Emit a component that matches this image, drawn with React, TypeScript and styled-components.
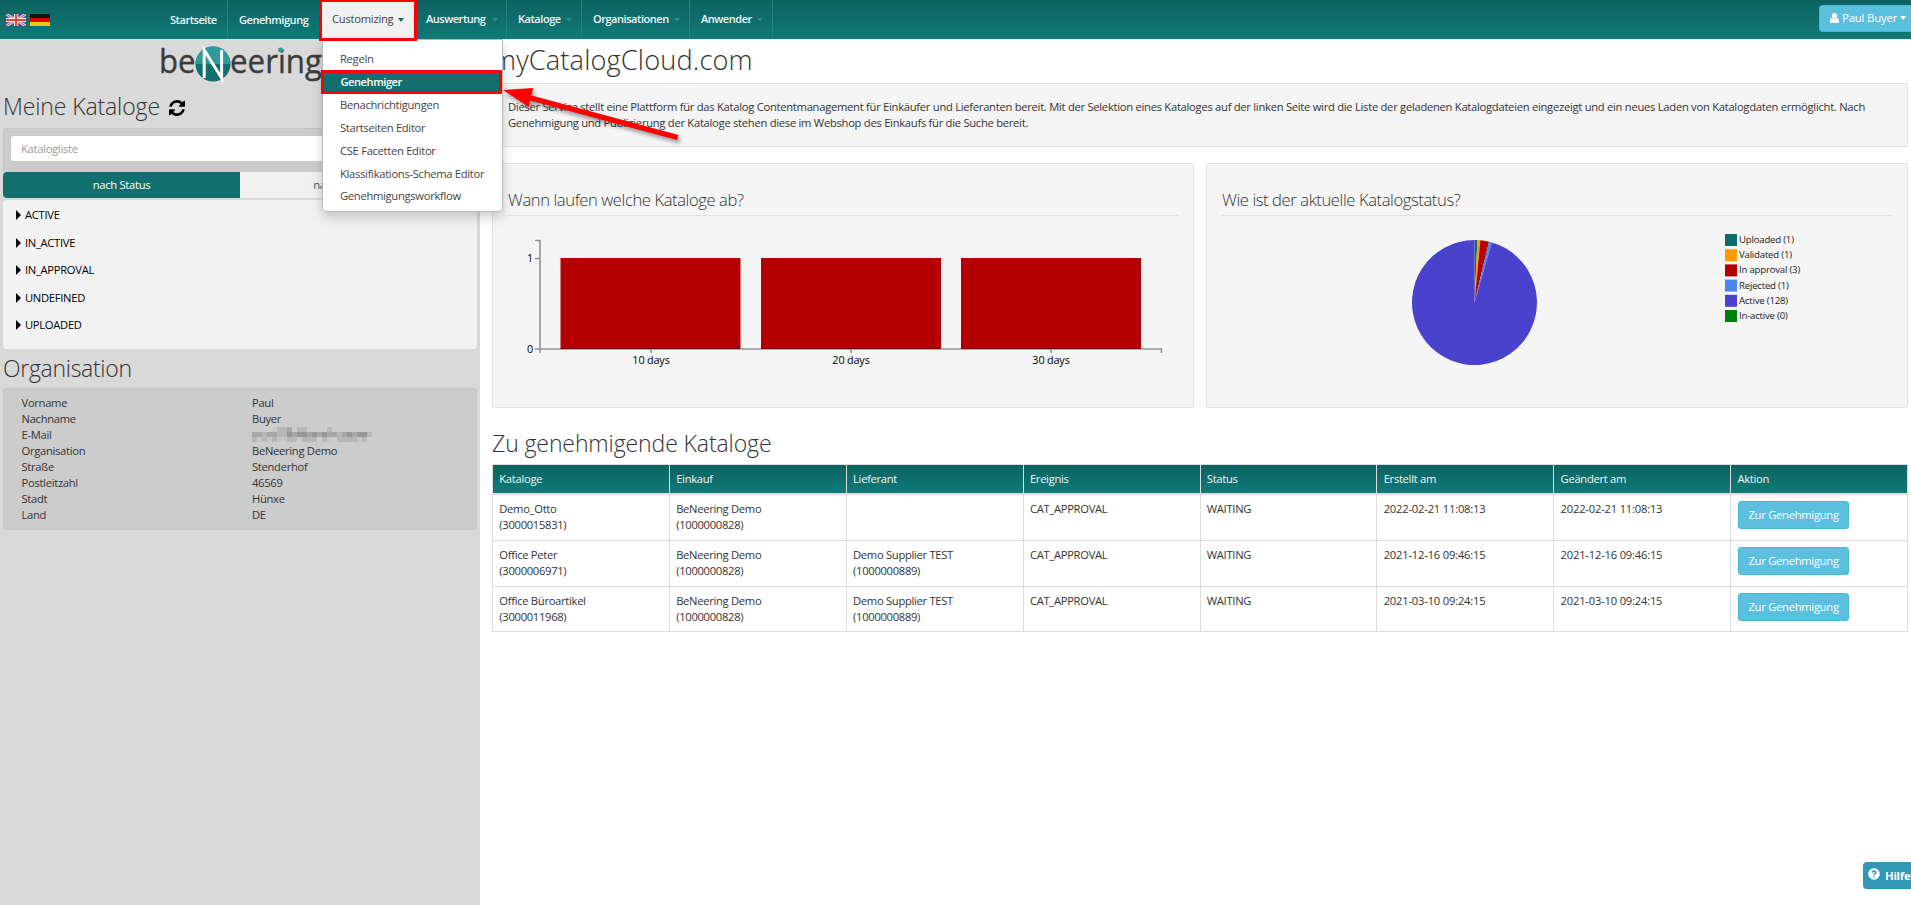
import React from "react";
import styled, { createGlobalStyle, css } from "styled-components";

const Global = createGlobalStyle`
  * { box-sizing: border-box; }
  body { margin: 0; background: #fff; overflow: hidden; }
  #root { height: 905px; }
`;

const Page = styled.div`
  position: relative;
  display: flex;
  flex-direction: column;
  height: 905px;
  width: 1911px;
  overflow: hidden;
  font: 11.2px/16px "Open Sans", "Noto Sans", sans-serif;
  letter-spacing: -0.29px;
  color: #333;
  white-space: nowrap;
`;

const Navbar = styled.header`
  display: flex;
  flex: none;
  align-items: stretch;
  height: 39px;
  background: linear-gradient(#0d6262, #107a78);
`;
const Flags = styled.div`
  display: flex;
  gap: 4px;
  align-items: center;
  width: 159px;
  padding-left: 6px;
`;
const NavItem = styled.div<{ $w: number; $top?: number; $active?: boolean }>`
  position: relative;
  width: ${(p) => p.$w}px;
  padding: ${(p) => p.$top ?? 11}px 0 0 11px;
  font-weight: 600;
  font-size: 11px;
  letter-spacing: -0.46px;
  color: #eef6f6;
  border-right: 1px solid #2b8080;
  ${(p) =>
    p.$active &&
    css`
      background: #f1f1f1;
      color: #444;
      font-weight: 400;
      font-size: 11.2px;
      letter-spacing: -0.25px;
      border-right: 0;
    `}
`;
const Caret = styled.i<{ $color?: string; $ml?: number }>`
  display: inline-block;
  margin-left: ${(p) => p.$ml ?? 6}px;
  vertical-align: 1px;
  border: 3.5px solid transparent;
  border-top-color: ${(p) => p.$color ?? "#2f8b89"};
  border-top-width: 4px;
  border-bottom: 0;
`;
const ActiveFrame = styled.span`
  position: absolute;
  z-index: 6;
  left: -2px;
  top: -1px;
  width: 98px;
  height: 42px;
  border: 3px solid #f00;
`;
const Menu = styled.div`
  position: absolute;
  z-index: 5;
  left: 1px;
  top: 39px;
  width: 181px;
  height: 173px;
  padding-top: 8px;
  letter-spacing: -0.29px;
  background: #fff;
  border: 1px solid #b9b9b9;
  border-radius: 0 0 4px 4px;
  box-shadow: 0 6px 12px rgba(0, 0, 0, 0.18);
`;
const MenuItem = styled.div<{ $on?: boolean }>`
  height: 22.9px;
  padding: 3px 0 0 17px;
  color: #444;
  ${(p) =>
    p.$on &&
    css`
      height: 24px;
      margin: -1px 0 0 -2px;
      padding: 1px 0 0 16.5px;
      color: #fff;
      font-size: 11px;
      letter-spacing: -0.4px;
      font-weight: 600;
      background: #11706f;
      border: 3px solid #f00;
    `}
`;
const UserButton = styled.div`
  display: flex;
  align-items: center;
  gap: 3px;
  width: 92px;
  height: 27px;
  margin: 5px 0 0 auto;
  padding: 0 0 1px 10px;
  font-size: 11.4px;
  letter-spacing: -0.2px;
  color: #fff;
  background: #5bc0de;
  border: 1px solid #46b8da;
  border-right: 0;
  border-radius: 4px 0 0 4px;
`;

const Body = styled.div`
  display: flex;
  flex: 1;
`;
const Sidebar = styled.aside`
  flex: none;
  width: 480px;
  padding: 0 3px;
  background: #d9d9d9;
`;
const LogoRow = styled.div`
  height: 48px;
  padding: 3px 0 0 155px;
`;
const Title = styled.h2<{ $h: number; $top: number; $size?: number; $ls?: number }>`
  height: ${(p) => p.$h}px;
  margin: 0;
  padding-top: ${(p) => p.$top}px;
  font-size: ${(p) => p.$size ?? 23}px;
  line-height: 30px;
  font-weight: 300;
  letter-spacing: ${(p) => p.$ls ?? -0.12}px;
  color: #333;
  svg { margin-left: 9px; vertical-align: -1px; }
`;
const SearchBox = styled.div`
  height: 44px;
  padding: 7px;
  background: #cbcbcb;
  border: 1px solid #c3c3c3;
  border-bottom: 0;
  border-radius: 3px 3px 0 0;
`;
const SearchField = styled.div`
  height: 25px;
  padding: 5px 10px;
  color: #999;
  background: #fff;
  border-radius: 3px;
`;
const Tabs = styled.div`
  display: flex;
  height: 26px;
  background: #f1f1f1;
  border-radius: 4px 4px 0 4px;
`;
const Tab = styled.div<{ $on?: boolean }>`
  flex: 1;
  padding-top: 5px;
  text-align: center;
  color: ${(p) => (p.$on ? "#fff" : "#11706f")};
  background: ${(p) => (p.$on ? "#11706f" : "transparent")};
  border-radius: 4px 0 0 4px;
`;
const StatusList = styled.div`
  height: 149px;
  margin-top: 2px;
  padding: 7px 0 0 13px;
  background: #f2f2f2;
  border-radius: 4px;
  color: #000;
`;
const StatusRow = styled.div`
  display: flex;
  align-items: center;
  gap: 4px;
  height: 16px;
  margin-bottom: 11.6px;
`;
const Triangle = styled.i`
  border: 5px solid transparent;
  border-left: 5px solid #000;
  border-right: 0;
`;
const OrgPanel = styled.dl`
  display: grid;
  grid-template-columns: 230.5px 1fr;
  height: 142px;
  margin: 0;
  padding: 6px 17.5px;
  align-content: start;
  background: #ccc;
  border: 1px solid #c5c5c5;
  border-radius: 3px;
  dt, dd { margin: 0; height: 16px; }
`;

const Main = styled.main`
  flex: 1;
  min-width: 0;
  padding: 0 3px 0 12px;
`;
const Panel = styled.section`
  background: #f5f5f5;
  border: 1px solid #e1e1e1;
  border-radius: 3px;
`;
const Intro = styled(Panel)`
  height: 64px;
  padding: 15px;
  letter-spacing: -0.267px;
`;
const Charts = styled.div`
  display: grid;
  grid-template-columns: 1fr 1fr;
  gap: 12px;
  height: 245px;
  margin: 16px 0 17px;
`;
const ChartPanel = styled(Panel)`
  padding: 21px 15px 0;
`;
const ChartTitle = styled.h3`
  height: 31px;
  margin: 0;
  font-size: 16.6px;
  line-height: 29px;
  font-weight: 300;
  letter-spacing: -0.4px;
  border-bottom: 1px solid #e2e2e2;
`;
const Drawing = styled.svg`
  display: block;
  overflow: visible;
  text { font-family: "Open Sans", "Noto Sans", sans-serif; }
`;
const Table = styled.div`
  border: 1px solid #ddd;
  border-width: 1px 0 0 1px;
`;
const Row = styled.div<{ $h: number; $head?: boolean }>`
  display: grid;
  grid-template-columns: repeat(8, 1fr);
  height: ${(p) => p.$h}px;
  border-bottom: ${(p) => (p.$head ? 2 : 1)}px solid #ddd;
  ${(p) => p.$head && css`color: #f2f8f8; background: linear-gradient(#0d6262, #107a78) padding-box;`}
`;
const Cell = styled.div<{ $date?: boolean }>`
  padding: 6px 0 0 6.3px;
  border-right: 1px solid #ddd;
  white-space: pre-line;
  letter-spacing: ${(p) => (p.$date ? "-0.2px" : "-0.29px")};
`;
const ActionButton = styled.div`
  width: 111px;
  height: 28px;
  margin-left: 0.7px;
  padding-top: 5px;
  text-align: center;
  letter-spacing: -0.26px;
  color: #fff;
  background: #5bc0de;
  border: 1px solid #46b8da;
  border-radius: 3px;
`;
const HelpTab = styled.div`
  position: absolute;
  right: 0;
  bottom: 16px;
  display: flex;
  align-items: center;
  gap: 5px;
  width: 48px;
  height: 27px;
  padding-left: 5px;
  color: #fff;
  font-weight: 700;
  font-size: 11.4px;
  background: #3197b7;
  border-radius: 4px 0 0 4px;
  svg { flex: none; margin-top: -3px; }
`;
const Arrow = styled.svg`
  position: absolute;
  z-index: 10;
  left: 495px;
  top: 78px;
  filter: drop-shadow(2px 3px 2px rgba(0, 0, 0, 0.4));
`;

const UkFlag = () => (
  <svg width="20" height="12" viewBox="0 0 20 12">
    <rect width="20" height="12" fill="#4a5ba6" />
    <path d="M0 0L20 12M20 0L0 12" stroke="#ead9e2" strokeWidth="2.6" />
    <path d="M0 0L20 12M20 0L0 12" stroke="#d8475a" strokeWidth="0.9" />
    <path d="M10 0V12M0 6H20" stroke="#fff" strokeWidth="4" />
    <path d="M10 0V12M0 6H20" stroke="#e8402c" strokeWidth="2" />
  </svg>
);
const DeFlag = () => (
  <svg width="20" height="12" viewBox="0 0 20 12">
    <rect width="20" height="4" fill="#111" />
    <rect y="4" width="20" height="4" fill="#e00000" />
    <rect y="8" width="20" height="4" fill="#fcc21a" />
  </svg>
);
const Logo = () => (
  <Drawing width="168" height="46" viewBox="0 0 168 46">
    <g fontSize="33" fill="#3c3c3b" stroke="#3c3c3b" strokeWidth="0.4" letterSpacing="0">
      <text x="1" y="31" textLength="36.500" lengthAdjust="spacingAndGlyphs">be</text>
      <text x="72" y="31" textLength="92" lengthAdjust="spacingAndGlyphs">eering</text>
    </g>
    <circle cx="55" cy="22" r="17.500" fill="#11706f" />
    <path d="M37.500 22a17.500 17.500 0 0 1 35 0z" fill="#2f9b99" />
    <path d="M46.200 36V8L63.600 36V8" fill="none" stroke="#fff" strokeWidth="3" />
    <circle cx="122.500" cy="8" r="2.400" fill="#2f9b99" />
  </Drawing>
);
const Refresh = () => (
  <svg width="16" height="16" viewBox="0 0 1536 1536">
    <path d="M1511 928q0 5-1 7-64 268-268 434.500t-478 166.500q-146 0-282.500-55t-243.500-157l-129 129q-19 19-45 19t-45-19-19-45v-448q0-26 19-45t45-19h448q26 0 45 19t19 45-19 45l-137 137q71 66 161 102t187 36q134 0 250-65t186-179q11-17 53-117 8-23 30-23h192q13 0 22.500 9.500t9.500 22.500zm25-800v448q0 26-19 45t-45 19h-448q-26 0-45-19t-19-45 19-45l138-138q-148-137-349-137-134 0-250 65t-186 179q-11 17-53 117-8 23-30 23h-199q-13 0-22.500-9.500t-9.500-22.500v-7q65-268 270-434.500t480-166.500q146 0 284 55.500t245 156.500l130-129q19-19 45-19t45 19 19 45z" />
  </svg>
);

const menu = ["Regeln", "Genehmiger", "Benachrichtigungen", "Startseiten Editor", "CSE Facetten Editor", "Klassifikations-Schema Editor", "Genehmigungsworkflow"];
const statuses = ["ACTIVE", "IN_ACTIVE", "IN_APPROVAL", "UNDEFINED", "UPLOADED"];
const org: [string, string | null][] = [
  ["Vorname", "Paul"], ["Nachname", "Buyer"], ["E-Mail", null], ["Organisation", "BeNeering Demo"],
  ["Straße", "Stenderhof"], ["Postleitzahl", "46569"], ["Stadt", "Hünxe"], ["Land", "DE"],
];
const slices = [
  { label: "Uploaded", n: 1, color: "#0d6c6c" },
  { label: "Validated", n: 1, color: "#ff9900" },
  { label: "In approval", n: 3, color: "#b40000" },
  { label: "Rejected", n: 1, color: "#4986ee" },
  { label: "Active", n: 128, color: "#4a42cc" },
  { label: "In-active", n: 0, color: "#008000" },
];
const heads = ["Kataloge", "Einkauf", "Lieferant", "Ereignis", "Status", "Erstellt am", "Geändert am", "Aktion"];
const rows = [
  ["Demo_Otto\n(3000015831)", "BeNeering Demo\n(1000000828)", "", "CAT_APPROVAL", "WAITING", "2022-02-21 11:08:13", "2022-02-21 11:08:13"],
  ["Office Peter\n(3000006971)", "BeNeering Demo\n(1000000828)", "Demo Supplier TEST\n(1000000889)", "CAT_APPROVAL", "WAITING", "2021-12-16 09:46:15", "2021-12-16 09:46:15"],
  ["Office Büroartikel\n(3000011968)", "BeNeering Demo\n(1000000828)", "Demo Supplier TEST\n(1000000889)", "CAT_APPROVAL", "WAITING", "2021-03-10 09:24:15", "2021-03-10 09:24:15"],
];

// Grey level of each 5px block that masks the mail address, one hex digit per block ("." is empty).
const mosaic = ["....cbba.bb....b........", "aabaabb9a99a9a9aaba9a99b", "bcbcbccbb.bbb.bc.bbbbcb."];
const MaskedMail = () => (
  <svg width="120" height="15" viewBox="0 0 24 3" shapeRendering="crispEdges">
    {mosaic.map((line, y) =>
      [...line].map((c, x) => c !== "." && <rect key={`${x}-${y}`} x={x} y={y} width="1" height="1" fill={`#${c}8${c}7${c}8`} />),
    )}
  </svg>
);

const BarChart = () => (
  <Drawing width="670" height="180" viewBox="508 216 670 180">
    {[560.5, 761, 961].map((x) => <rect key={x} x={x} y="258" width="180" height="91" fill="#b40000" />)}
    <path d="M535 240.500H540V349H535M535 258.500H540M540 353V349H1161.500V353M651 349V353M851 349V353M1051 349V353" fill="none" stroke="#000" strokeOpacity="0.4" strokeWidth="1.600" />
    <g fontSize="10.800" fill="#000">
      <text x="533" y="262" textAnchor="end">1</text>
      <text x="533" y="353" textAnchor="end">0</text>
      {[10, 20, 30].map((d, i) => <text key={d} x={651 + i * 200} y="364" textAnchor="middle" letterSpacing="-0.15">{d} days</text>)}
    </g>
  </Drawing>
);

const total = slices.reduce((s, d) => s + d.n, 0);
const PieChart = () => {
  let acc = 0;
  const at = (n: number) => {
    const a = (n / total) * Math.PI * 2;
    return `${1474.5 + 62.5 * Math.sin(a)} ${302.5 - 62.5 * Math.cos(a)}`;
  };
  return (
    <Drawing width="670" height="180" viewBox="1222 216 670 180">
      {slices.filter((s) => s.n).map((s) => {
        const from = at(acc);
        acc += s.n;
        return <path key={s.label} d={`M1474.500 302.500L${from}A62.500 62.500 0 ${s.n > total / 2 ? 1 : 0} 1 ${at(acc)}Z`} fill={s.color} />;
      })}
      {slices.map((s, i) => (
        <g key={s.label}>
          <rect x="1725" y={234 + i * 15.2} width="12" height="12" fill={s.color} />
          <text x="1739" y={243 + i * 15.2} fontSize="9.600" letterSpacing="-0.2" fill="#222">{s.label} ({s.n})</text>
        </g>
      ))}
    </Drawing>
  );
};

export default function App() {
  return (
    <Page>
      <Global />
      <Navbar>
        <Flags><UkFlag /><DeFlag /></Flags>
        <NavItem $w={69} $top={12}>Startseite</NavItem>
        <NavItem $w={93} $top={12}>Genehmigung</NavItem>
        <NavItem $w={94} $active>
          Customizing<Caret $color="#11706f" $ml={5} />
          <Menu>{menu.map((m) => <MenuItem key={m} $on={m === "Genehmiger"}>{m}</MenuItem>)}</Menu>
          <ActiveFrame />
        </NavItem>
        <NavItem $w={92}>Auswertung<Caret /></NavItem>
        <NavItem $w={75}>Kataloge<Caret $ml={5} /></NavItem>
        <NavItem $w={108}>Organisationen<Caret $ml={5} /></NavItem>
        <NavItem $w={83}>Anwender<Caret $ml={5} /></NavItem>
        <UserButton>
          <svg width="9" height="10" viewBox="0 0 9 10" fill="#fff"><circle cx="4.500" cy="2.700" r="2.700" /><path d="M0 10V8Q0 5 2.200 5Q4.500 6.800 6.800 5Q9 5 9 8V10Z" /></svg>
          Paul Buyer
          <Caret $color="#fff" $ml={0} />
        </UserButton>
      </Navbar>
      <Body>
        <Sidebar>
          <LogoRow><Logo /></LogoRow>
          <Title $h={41} $top={4}>Meine Kataloge<Refresh /></Title>
          <SearchBox><SearchField>Katalogliste</SearchField></SearchBox>
          <Tabs><Tab $on>nach Status</Tab><Tab>nach Organisation</Tab></Tabs>
          <StatusList>{statuses.map((s) => <StatusRow key={s}><Triangle />{s}</StatusRow>)}</StatusList>
          <Title $h={39} $top={4} $ls={-0.3}>Organisation</Title>
          <OrgPanel>
            {org.map(([k, v]) => <React.Fragment key={k}><dt>{k}</dt><dd>{v ?? <MaskedMail />}</dd></React.Fragment>)}
          </OrgPanel>
        </Sidebar>
        <Main>
          <Title $h={44} $top={6} $size={27.2} $ls={0.15}>myCatalogCloud.com</Title>
          <Intro>
            Dieser Service stellt eine Plattform für das Katalog Contentmanagement für Einkäufer und Lieferanten bereit. Mit der Selektion eines Kataloges auf der linken Seite wird die Liste der geladenen Katalogdateien eingezeigt und ein neues Laden von Katalogdaten ermöglicht. Nach<br />
            Genehmigung und Publizierung der Kataloge stehen diese im Webshop des Einkaufs für die Suche bereit.
          </Intro>
          <Charts>
            <ChartPanel><ChartTitle>Wann laufen welche Kataloge ab?</ChartTitle><BarChart /></ChartPanel>
            <ChartPanel><ChartTitle>Wie ist der aktuelle Katalogstatus?</ChartTitle><PieChart /></ChartPanel>
          </Charts>
          <Title $h={39} $top={3} $ls={-0.1}>Zu genehmigende Kataloge</Title>
          <Table>
            <Row $h={30} $head>{heads.map((h) => <Cell key={h}>{h}</Cell>)}</Row>
            {rows.map((r, i) => (
              <Row key={i} $h={i === 2 ? 45 : 46}>
                {r.map((c, j) => <Cell key={j} $date={j > 4}>{c}</Cell>)}
                <Cell><ActionButton>Zur Genehmigung</ActionButton></Cell>
              </Row>
            ))}
          </Table>
        </Main>
      </Body>
      <HelpTab>
        <svg width="12" height="12" viewBox="0 0 12 12"><circle cx="6" cy="6" r="5.800" fill="#fff" /><path d="M4.200 4.600Q4.300 3 6 3T7.800 4.600Q7.800 5.500 6.600 6Q6 6.300 6 7.200M6 8.200V9.400" fill="none" stroke="#3197b7" strokeWidth="1.500" /></svg>
        Hilfe
      </HelpTab>
      <Arrow width="195" height="75" viewBox="495 78 195 75">
        <path d="M503 90L533 88L531.500 95.500L678.500 135L677 140L530 100.500L528.700 107Z" fill="#f00" />
      </Arrow>
    </Page>
  );
}
